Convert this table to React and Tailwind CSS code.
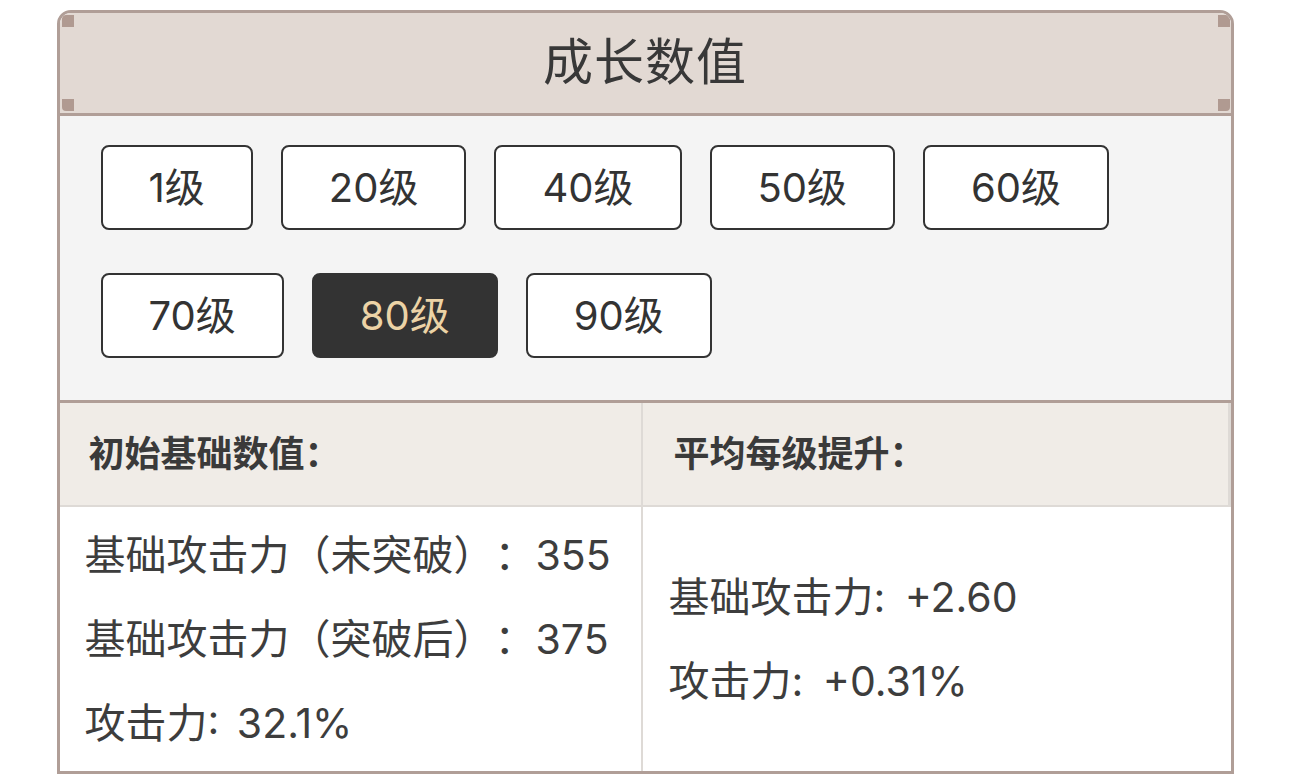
import React, { useState } from 'react';

const levels = ['1级', '20级', '40级', '50级', '60级', '70级', '80级', '90级'];

function Corner({ className }) {
  return <span className={`absolute w-[12px] h-[12px] bg-[#b09a91] ${className}`} />;
}

export default function App() {
  const [level, setLevel] = useState('80级');

  return (
    <div className="w-full min-h-[778px] bg-white pt-[10px] font-['Inter','Noto_Sans_CJK_SC',sans-serif] text-[#333] [text-spacing-trim:space-all]">
      <div className="mx-auto w-[1177px] border-[3px] border-[#b09e97] rounded-t-[14px] overflow-hidden">
        {/* title */}
        <div className="relative h-[103px] bg-[#e2d9d3] border-b-[3px] border-[#b09e97] flex items-center justify-center">
          <Corner className="left-[2px] top-[2px] rounded-tl-[4px]" />
          <Corner className="left-[2px] bottom-[2px] rounded-bl-[4px]" />
          <Corner className="right-[1px] top-[2px] rounded-tr-[4px]" />
          <Corner className="right-[1px] bottom-[2px] rounded-br-[4px]" />
          <h2 className="text-[50px] leading-none tracking-[1px] text-[#383838] pb-[3px]">成长数值</h2>
        </div>

        {/* level buttons */}
        <div className="bg-[#f4f4f4] pl-[41px] pr-[20px] pt-[29px] pb-[42px] flex flex-wrap gap-x-[28px] gap-y-[43px]">
          {levels.map((l) =>
            l == level ?
              <button key={l} onClick={() => setLevel(l)} className="h-[85px] px-[46px] rounded-[8px] border-2 border-[#333] bg-[#333] text-[#ecd3a6] text-[40px] leading-none">{l}</button> :
              <button key={l} onClick={() => setLevel(l)} className="h-[85px] px-[46px] rounded-[8px] border-2 border-[#333] bg-white text-[#333] text-[40px] leading-none">{l}</button>
          )}
        </div>

        {/* stats table */}
        <div className="grid grid-cols-[583px_1fr] border-t-[3px] border-[#b09e97]">
          <div className="h-[104px] bg-[#f0ece7] border-b-2 border-r-2 border-[#dedad6] flex items-center pl-[29px] text-[36px] font-bold text-[#3a3a3a]">初始基础数值：</div>
          <div className="h-[104px] bg-[#f0ece7] border-b-2 border-r-[3px] border-[#dedad6] flex items-center pl-[31px] text-[36px] font-bold text-[#3a3a3a]">平均每级提升：</div>
          <div className="h-[264px] border-r-2 border-[#dedad6] bg-white pl-[25px] py-[6px] text-[41px] leading-[84px] text-[#3d3d3d] [word-spacing:6px]">
            <p>基础攻击力（未突破）：355</p>
            <p>基础攻击力（突破后）：375</p>
            <p>攻击力: 32.1%</p>
          </div>
          <div className="h-[264px] bg-white pl-[26px] flex flex-col justify-center text-[41px] leading-[84px] text-[#3d3d3d] [word-spacing:8px]">
            <p>基础攻击力: +2.60</p>
            <p>攻击力: +0.31%</p>
          </div>
        </div>
      </div>
    </div>
  );
}
